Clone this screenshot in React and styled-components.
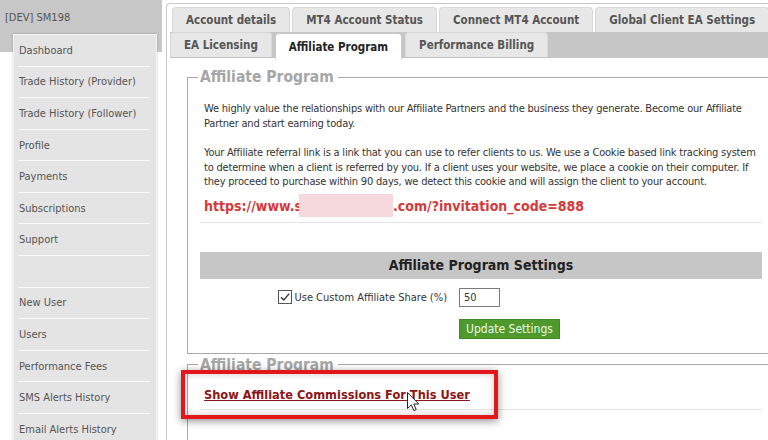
import React from "react";
import styled, { createGlobalStyle } from "styled-components";

const FONT = `"DejaVu Sans Condensed", "Liberation Sans", sans-serif`;

const Global = createGlobalStyle`
  html, body { margin: 0; padding: 0; background: #fff; }
  body { width: 768px; height: 440px; overflow: hidden; font-family: ${FONT}; font-size: 11px; color: #333; }
  * { box-sizing: border-box; }
`;

const Page = styled.div`
  position: relative;
  display: flex;
  width: 768px;
  height: 440px;
  overflow: hidden;
`;

const Sidebar = styled.aside`
  width: 166px;
  flex: none;
  display: flex;
  flex-direction: column;
`;

const SideHeader = styled.div`
  width: 162px;
  height: 52px;
  background: #c7c7c7;
  color: #555;
  font-size: 11px;
  padding: 11px 0 0 5px;
  flex: none;
`;

const Menu = styled.nav`
  margin: -18px 0 0 13px;
  width: 144px;
  flex: 1;
  background: #e4e4e4;
  border: 1px solid #f3f3f3;
  box-shadow: 0 0 2px rgba(0, 0, 0, 0.25);
  position: relative;
`;

const MenuItem = styled.div`
  height: 31.58px;
  margin: 0 6px 0 4px;
  border-bottom: 1px solid #f8f8f8;
  display: flex;
  align-items: center;
  padding-left: 1px;
  color: #555;
  font-size: 11px;
`;

const Main = styled.main`
  flex: 1;
  padding-top: 3px;
  min-width: 0;
`;

const Widget = styled.div`
  height: 100%;
  margin-right: -20px;
  border: 1px solid #c9c9c9;
  border-right: none;
  border-bottom: none;
  border-radius: 4px 0 0 0;
  padding: 3px 0 0 3px;
  background: #fff;
`;

const TabNav = styled.div`
  border-bottom: 1px solid #c2c2c2;
`;

const TabRow = styled.div`
  display: flex;
  gap: ${(p) => p.$gap}px;
  height: 25px;
  padding-left: ${(p) => p.$indent}px;
  background: ${(p) => (p.$shaded ? "#c6c6c6" : "#fff")};
`;

const Tab = styled.div`
  position: relative;
  z-index: 1;
  height: ${(p) => (p.$active ? 26 : 25)}px;
  margin-top: ${(p) => (p.$active ? 1 : 0)}px;
  padding: 0 13px;
  display: flex;
  align-items: center;
  white-space: nowrap;
  font-weight: bold;
  font-size: 11.5px;
  color: ${(p) => (p.$active ? "#222" : "#555")};
  background: ${(p) => (p.$active ? "#fff" : "#e7e7e7")};
  border: 1px solid ${(p) => (p.$active ? "#c8c8c8" : "#d8d8d8")};
  border-bottom: none;
  border-radius: 4px 4px 0 0;
`;

const Panel = styled.div`
  padding: 9px 0 0 17px;
`;

const Fieldset = styled.fieldset`
  margin: ${(p) => (p.$second ? "1px" : "0")} 0 0 0;
  border: 1px solid #a9a9a9;
  border-right: none;
  padding: ${(p) => (p.$second ? "12px 26px 40px 12px" : "15px 26px 14px 12px")};
  min-width: 0;
`;

const Legend = styled.legend`
  margin-left: -2px;
  padding: 0 4px 0 2px;
  font-size: 15.5px;
  line-height: 20px;
  font-weight: bold;
  color: #a6a6a6;
`;

const Para = styled.p`
  margin: 0 3px 15px 4px;
  line-height: 14.5px;
  color: #333;
  font-size: 11px;
  letter-spacing: -0.2px;
`;

const RefLink = styled.div`
  margin: -8px 0 7px 4px;
  height: 18px;
  line-height: 18px;
  font-size: 14px;
  font-weight: bold;
  color: #d43a3a;
  white-space: nowrap;
  display: flex;
  align-items: center;
`;

const Masked = styled.span`
  display: inline-block;
  width: 94px;
  height: 23px;
  margin-left: -3px;
  background: #f6d9dc;
`;

const Rule = styled.div`
  height: 1px;
  background: #e4e4e4;
`;

const SettingsBar = styled.div`
  margin-top: 29px;
  height: 27px;
  background: #c6c6c6;
  display: flex;
  align-items: center;
  justify-content: center;
  font-size: 14px;
  font-weight: bold;
  color: #222;
`;

const FormGrid = styled.div`
  display: grid;
  grid-template-columns: 259px 120px;
  row-gap: 12px;
  margin-top: 9px;
  align-items: center;
`;

const CheckLabel = styled.label`
  justify-self: end;
  padding-right: 12px;
  display: flex;
  align-items: center;
  gap: 1px;
  color: #333;
  font-size: 11px;
`;

const ShareInput = styled.div`
  width: 41px;
  height: 19px;
  border: 1px solid #7a7a7a;
  padding-left: 4px;
  display: flex;
  align-items: center;
  font-size: 11px;
  color: #333;
`;

const UpdateButton = styled.div`
  grid-column: 2;
  width: 101px;
  height: 20px;
  background: #4e9a2c;
  border: 1px solid #3f8a22;
  color: #eef7ea;
  font-size: 12px;
  display: flex;
  align-items: center;
  justify-content: center;
`;

const CommissionLink = styled.a`
  display: block;
  margin: 0 0 6px 4px;
  line-height: 16px;
  font-size: 12.7px;
  font-weight: bold;
  color: #8c1515;
  text-decoration: underline;
  white-space: nowrap;
`;

const Highlight = styled.div`
  position: absolute;
  left: 181px;
  top: 370px;
  width: 317px;
  height: 49px;
  border: 4px solid #e3161a;
  box-shadow: 0 2px 8px rgba(0, 0, 0, 0.45), inset 0 0 7px rgba(0, 0, 0, 0.22);
  pointer-events: none;
`;

const Cursor = styled.svg`
  position: absolute;
  left: 407px;
  top: 392px;
`;

const menuItems = [
  "Dashboard",
  "Trade History (Provider)",
  "Trade History (Follower)",
  "Profile",
  "Payments",
  "Subscriptions",
  "Support",
  "",
  "New User",
  "Users",
  "Performance Fees",
  "SMS Alerts History",
  "Email Alerts History",
];

const row1 = ["Account details", "MT4 Account Status", "Connect MT4 Account", "Global Client EA Settings"];
const row2 = ["EA Licensing", "Affiliate Program", "Performance Billing"];

export default function App() {
  return (
    <>
      <Global />
      <Page>
        <Sidebar>
          <SideHeader>[DEV] SM198</SideHeader>
          <Menu>
            {menuItems.map((m, i) => (
              <MenuItem key={i}>{m}</MenuItem>
            ))}
          </Menu>
        </Sidebar>
        <Main>
          <Widget>
            <TabNav>
              <TabRow $indent={2} $gap={2}>
                {row1.map((t) => (
                  <Tab key={t}>{t}</Tab>
                ))}
              </TabRow>
              <TabRow $indent={0} $gap={3} $shaded>
                {row2.map((t) => (
                  <Tab key={t} $active={t === "Affiliate Program"}>
                    {t}
                  </Tab>
                ))}
              </TabRow>
            </TabNav>
            <Panel>
              <Fieldset>
                <Legend>Affiliate Program</Legend>
                <Para>
                  We highly value the relationships with our Affiliate Partners and the business they generate. Become our Affiliate
                  Partner and start earning today.
                </Para>
                <Para>
                  Your Affiliate referral link is a link that you can use to refer clients to us. We use a Cookie based link tracking system
                  to determine when a client is referred by you. If a client uses your website, we place a cookie on their computer. If
                  they proceed to purchase within 90 days, we detect this cookie and will assign the client to your account.
                </Para>
                <RefLink>
                  https://www.s<Masked />.com/?invitation_code=888
                </RefLink>
                <Rule />
                <SettingsBar>Affiliate Program Settings</SettingsBar>
                <FormGrid>
                  <CheckLabel>
                    <svg width="15" height="15" viewBox="0 0 15 15">
                      <rect x="0.5" y="0.5" width="13" height="13" fill="#fff" stroke="#555" />
                      <path d="M3 7.2 L5.8 10 L11.2 3.6" fill="none" stroke="#333" strokeWidth="1.4" />
                    </svg>
                    Use Custom Affiliate Share (%)
                  </CheckLabel>
                  <ShareInput>50</ShareInput>
                  <UpdateButton>Update Settings</UpdateButton>
                </FormGrid>
              </Fieldset>
              <Fieldset $second>
                <Legend>Affiliate Program</Legend>
                <CommissionLink href="#">Show Affiliate Commissions For This User</CommissionLink>
                <Rule />
              </Fieldset>
            </Panel>
          </Widget>
        </Main>
        <Highlight />
        <Cursor width="13" height="20" viewBox="0 0 13 20">
          <path d="M0.5 0.5 L0.5 16.5 L4.3 12.9 L6.8 18.6 L9.2 17.6 L6.8 12 L11.8 12 Z" fill="#fff" stroke="#222" strokeWidth="1" strokeLinejoin="round" />
        </Cursor>
      </Page>
    </>
  );
}
